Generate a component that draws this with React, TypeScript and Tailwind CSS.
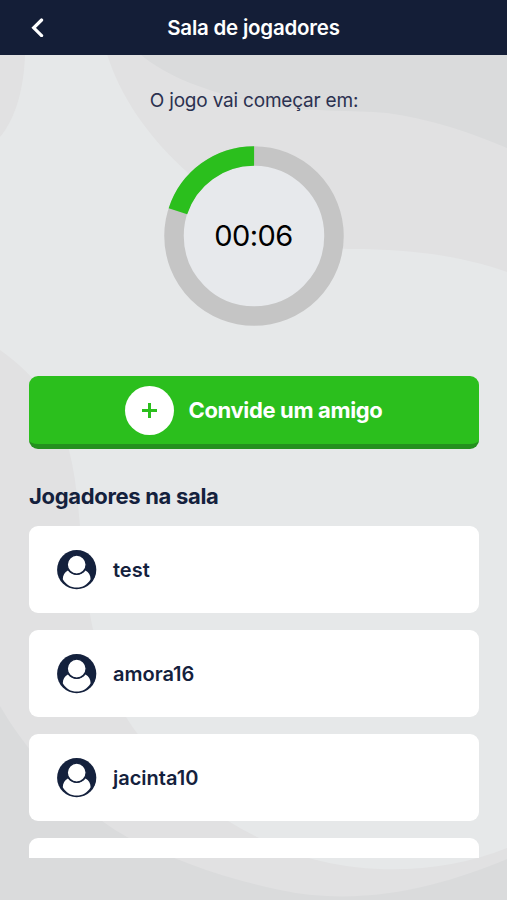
import { useState } from "react";

interface Player {
  id: number;
  name: string;
}

const TOTAL_SECONDS = 30;

const players: Player[] = [
  { id: 1, name: "test" },
  { id: 2, name: "amora16" },
  { id: 3, name: "jacinta10" },
  { id: 4, name: "" },
];

const Background = () => (
  <svg className="absolute inset-0 -z-10 h-full w-full" viewBox="0 0 507 900" preserveAspectRatio="none" aria-hidden="true">
    <path fill="#e1e1e2" d="M0 54H25C24 90 15 119 0 137Z" />
    <path fill="#e1e1e2" d="M107 54C120 96 148 137 187 172C235 232 290 248 350 249C415 249 465 257 507 272V54Z" />
    <path fill="#dadbdc" d="M140 54C170 80 220 96 275 106C315 112 350 110 387 113C430 119 470 132 507 148V54Z" />
    <path fill="#e1e1e2" d="M0 350C39 377 60 411 69 450C82 500 79 560 92 625C102 669 115 704 137 733C165 773 205 812 257 837C330 877 430 879 507 848V900H0Z" />
    <path fill="#dadbdc" d="M0 706C27 752 75 808 127 837C175 861 230 880 280 890C365 908 445 885 507 859V900H0Z" />
  </svg>
);

const UserIcon = () => (
  <svg className="h-10 w-10 shrink-0" viewBox="0 0 40 40" aria-hidden="true">
    <circle cx="19.7" cy="19.7" r="19.6" fill="#14213d" />
    <path fill="#fff" d="M10.9 20.6C13.2 23.6 16.2 25 19.7 25S26.2 23.6 28.5 20.6C31.7 22.2 33.6 25.6 33.6 29.2C30.5 34.5 25.5 37.6 19.7 37.6S8.9 34.5 5.8 29.2C5.8 25.6 7.7 22.2 10.9 20.6Z" />
    <circle cx="19.7" cy="14.6" r="9.5" fill="#fff" stroke="#14213d" strokeWidth="1.4" />
  </svg>
);

const Countdown = ({ seconds }: { seconds: number }) => {
  const progress = (seconds / TOTAL_SECONDS) * 100;

  return (
    <div className="grid h-[180px] w-[180px] place-items-center rounded-full">
      <svg className="col-start-1 row-start-1" width="180" height="180" viewBox="0 0 180 180">
        <circle cx="90" cy="90" r="80" fill="#e7e9ec" stroke="#c5c5c5" strokeWidth="19.5" />
        <circle
          cx="90"
          cy="90"
          r="80"
          fill="none"
          stroke="#2bbf1d"
          strokeWidth="19.5"
          pathLength="100"
          strokeDasharray={`${progress} 100`}
          transform={`rotate(${-90 - progress * 3.6} 90 90)`}
        />
      </svg>
      <span className="col-start-1 row-start-1 pr-px text-[29px] leading-none tracking-[-0.5px] text-black">
        00:{String(seconds).padStart(2, "0")}
      </span>
    </div>
  );
};

const App = () => {
  const [seconds] = useState(6);

  return (
    <div className="relative isolate flex h-[900px] w-full flex-col overflow-hidden bg-[#e6e8e9] font-['Inter',sans-serif] text-[#14213d]">
      <Background />

      <header className="grid h-[54.5px] shrink-0 grid-cols-[1fr_auto_1fr] items-center bg-[#141e37] text-white">
        <button className="ml-[30px] w-4" aria-label="Voltar">
          <svg className="h-5 w-4" viewBox="0 0 16 20" fill="none" stroke="currentColor" strokeWidth="3.2" strokeLinecap="round">
            <path d="M11.6 3L3.7 10.8L11.6 18.6" />
          </svg>
        </button>
        <h1 className="pt-0.5 text-[20.5px] font-semibold tracking-[-0.22px]">Sala de jogadores</h1>
      </header>

      <main className="flex min-h-0 flex-1 flex-col pr-7 pb-[42px] pl-[29px]">
        <section className="flex flex-col items-center pt-8">
          <p className="mb-[31px] text-[19px] leading-7 tracking-[-0.2px] text-[#2b3150]">O jogo vai começar em:</p>
          <Countdown seconds={seconds} />
        </section>

        <button className="mt-[50.5px] flex h-[73px] shrink-0 items-center justify-center gap-3.5 rounded-[9px] border-b-[5px] border-[#24901e] bg-[#2bbf1d] text-white">
          <span className="flex h-[49px] w-[49px] items-center justify-center rounded-full bg-white">
            <svg className="h-[15px] w-[15px]" viewBox="0 0 15 15" stroke="#2bbf1d" strokeWidth="3">
              <path d="M7.5 0V15M0 7.5H15" />
            </svg>
          </span>
          <span className="text-[22px] font-bold tracking-[-0.35px]">Convide um amigo</span>
        </button>

        <h2 className="mt-[31px] mb-[14.3px] text-[22px] leading-8 font-bold tracking-[-0.32px]">Jogadores na sala</h2>

        <ul className="flex min-h-0 flex-1 flex-col gap-[17px] overflow-hidden">
          {players.map((player) => (
            <li key={player.id} className="flex h-[87px] shrink-0 items-center gap-4 rounded-[9px] bg-white pl-7">
              <UserIcon />
              <span className="text-xl font-semibold">{player.name}</span>
            </li>
          ))}
        </ul>
      </main>
    </div>
  );
};

export default App;
